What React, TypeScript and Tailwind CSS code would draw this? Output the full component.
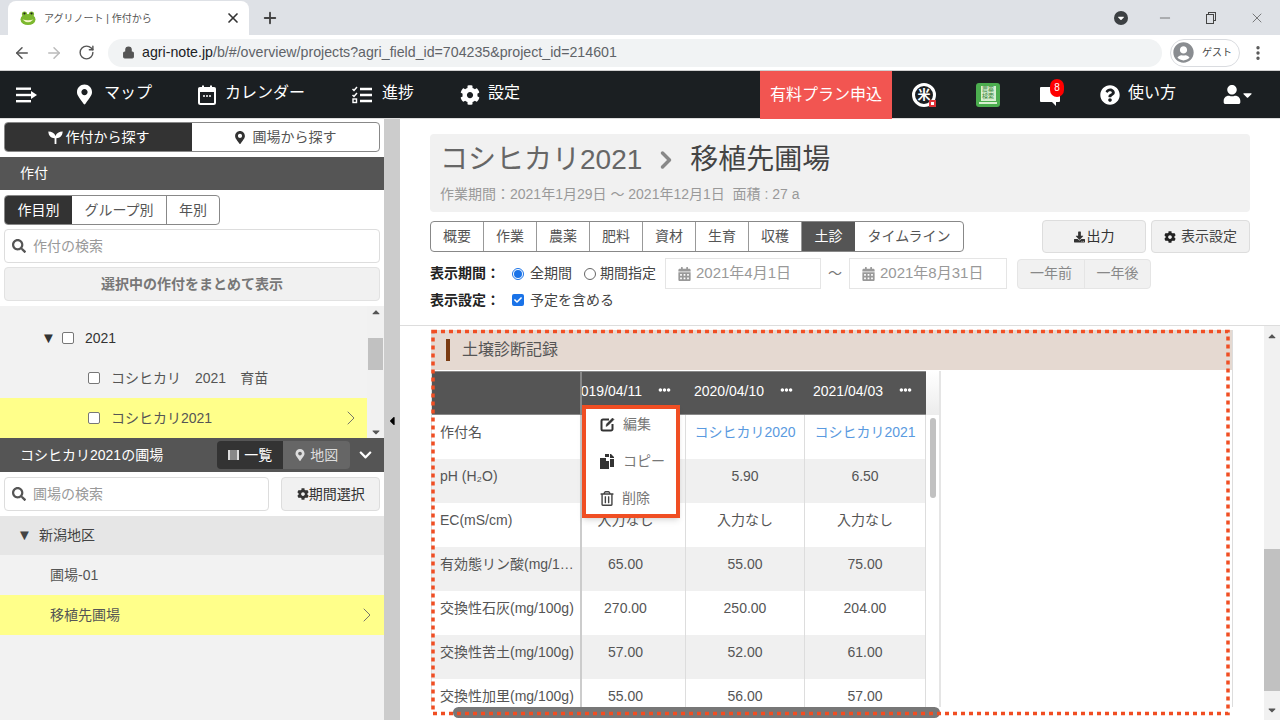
import { ReactNode } from "react"
import {
  FaMapMarkerAlt,
  FaCog,
  FaQuestionCircle,
  FaUser,
  FaUserCircle,
  FaCaretDown,
  FaCaretUp,
  FaCaretLeft,
  FaSearch,
  FaDownload,
  FaCalendarAlt,
  FaRegTrashAlt,
  FaEllipsisH,
  FaChevronDown,
  FaCheck,
} from "react-icons/fa"
import { ArrowLeft, ArrowRight, RotateCw, Lock, Plus, X, Minus, ChevronRight, EllipsisVertical } from "lucide-react"

const FONT = "[font-family:'Liberation_Sans','Noto_Sans_CJK_JP',sans-serif]"

function Frog() {
  return (
    <svg width="16" height="16" viewBox="0 0 16 16">
      <circle cx="4.5" cy="4" r="2.6" fill="#7cb82f" />
      <circle cx="11.5" cy="4" r="2.6" fill="#7cb82f" />
      <circle cx="4.5" cy="3.6" r="1.1" fill="#222" />
      <circle cx="11.5" cy="3.6" r="1.1" fill="#222" />
      <ellipse cx="8" cy="9.5" rx="7.5" ry="5.5" fill="#7cb82f" />
      <path d="M2.5 9.5 Q8 11 13.5 9.5 Q8 15 2.5 9.5Z" fill="#f4f7c8" />
    </svg>
  )
}

function Hamburger() {
  return (
    <svg width="21" height="16" viewBox="0 0 21 16" fill="#fff">
      <rect x="0" y="0.5" width="15" height="2.4" />
      <rect x="0" y="6.8" width="15" height="2.4" />
      <rect x="0" y="13" width="15" height="2.4" />
      <path d="M15 4 L21 8 L15 12Z" />
    </svg>
  )
}

function CalendarIcon() {
  return (
    <svg width="18" height="20" viewBox="0 0 18 20" fill="none" stroke="#fff">
      <rect x="1" y="3" width="16" height="16" rx="1.5" strokeWidth="2" />
      <rect x="1" y="3" width="16" height="3.5" fill="#fff" strokeWidth="1" />
      <path d="M5 0.5v3M13 0.5v3" strokeWidth="2" />
      <path d="M5 11h2M8 11h2M11 11h2" strokeWidth="1.6" />
    </svg>
  )
}

function TasksIcon() {
  return (
    <svg width="20" height="18" viewBox="0 0 20 18" fill="none" stroke="#fff">
      <path d="M0.5 3 L2 4.5 L5 1" strokeWidth="1.5" />
      <path d="M0.5 9 L2 10.5 L5 7" strokeWidth="1.5" />
      <rect x="1" y="13" width="3.5" height="3.5" strokeWidth="1.4" />
      <path d="M8 3h12M8 9h12M8 15h12" strokeWidth="2.4" />
    </svg>
  )
}

function Sprout() {
  return (
    <svg width="15" height="14" viewBox="0 0 15 14" fill="#fff">
      <path d="M6.6 14V8.2C3 8.2 0.6 6 0.3 1.5 4 1.6 6.5 3 7.5 6 8.5 3 11 1.6 14.7 1.5 14.4 6 12 8.2 8.4 8.2V14Z" />
    </svg>
  )
}

function KomeIcon() {
  return (
    <div className="relative flex h-6 w-6 items-center justify-center rounded-full border-[3px] border-white text-[13px] leading-none font-bold text-white">
      米
      <span className="absolute -right-[3px] -bottom-[3px] h-[7px] w-[7px] border-2 border-[#e0343a] bg-white" />
    </div>
  )
}

function BookIcon() {
  return (
    <div className="relative flex h-6 w-6 flex-col items-center rounded-[3px] bg-[#4cae4f] pt-[3px]">
      <div className="flex h-[15px] w-[15px] items-center justify-center bg-[#d8efd0] text-center text-[6px] leading-[7px] text-[#2f7d32]">
        農薬
        <br />
        検索
      </div>
      <span className="absolute bottom-[3px] h-[2px] w-[18px] bg-[#d8efd0]" />
    </div>
  )
}

function Bubble() {
  return (
    <div className="relative h-5 w-5">
      <svg width="20" height="22" viewBox="0 0 20 22" fill="#fff">
        <path d="M1 2h18a1 1 0 0 1 1 1v13a1 1 0 0 1-1 1h-3v4l-4-4H1a1 1 0 0 1-1-1V3a1 1 0 0 1 1-1Z" />
      </svg>
      <span className="absolute -top-[6px] left-[10px] flex h-[18px] w-[14px] items-center justify-center rounded-full bg-[#f00] text-[10px] text-white">8</span>
    </div>
  )
}

function NavItem({ icon, label, className }: { icon: ReactNode; label: string; className: string }) {
  return (
    <div className={`flex items-center text-[16px] text-white ${className}`}>
      {icon}
      <span className="pb-[3px]">{label}</span>
    </div>
  )
}

function Browser() {
  return (
    <>
      <div className="flex h-[35px] items-end bg-[#dee1e6]">
        <div className="ml-[8px] flex h-[34px] w-[241px] items-center rounded-t-lg bg-white pl-[12px] text-[10px] text-[#555]">
          <Frog />
          <span className="ml-[8px] whitespace-pre">アグリノート | 作付から</span>
          <X className="ml-auto mr-[8px] h-4 w-4 text-[#333]" strokeWidth={2.5} />
        </div>
        <Plus className="mb-[8px] ml-[12px] h-[18px] w-[18px] text-[#444]" strokeWidth={2.5} />
        <div className="ml-auto flex h-full items-center pr-[15px] text-[#444]">
          <div className="flex h-[14px] w-[14px] items-center justify-center rounded-full bg-[#3c4043]">
            <FaCaretDown className="h-[10px] w-[10px] text-white" />
          </div>
          <Minus className="ml-[29px] h-[16px] w-[16px]" strokeWidth={1} />
          <div className="relative ml-[30px] h-[16px] w-[16px]">
            <div className="absolute top-[2px] left-[5px] h-[9px] w-[8px] border border-[#444]" />
            <div className="absolute top-[4px] left-[3px] h-[10px] w-[8px] border border-[#444] bg-[#dee1e6]" />
          </div>
          <X className="ml-[30px] h-[16px] w-[16px]" strokeWidth={1} />
        </div>
      </div>
      <div className="flex h-[36px] items-center border-b border-[#d0d0d0] bg-white">
        <ArrowLeft className="ml-[13px] h-[18px] w-[18px] text-[#555]" strokeWidth={2} />
        <ArrowRight className="ml-[14px] h-[18px] w-[18px] text-[#bbb]" strokeWidth={2} />
        <RotateCw className="ml-[15px] h-[17px] w-[17px] text-[#555]" strokeWidth={2} />
        <div className="ml-[13px] flex h-[28px] w-[1054px] items-center rounded-full bg-[#f1f3f4] pl-[14px] text-[14.2px] text-[#202124]">
          <Lock className="h-[13px] w-[13px] fill-[#555] text-[#555]" />
          <span className="ml-[7px]">
            agri-note.jp<span className="text-[#5f6368]">/b/#/overview/projects?agri_field_id=704235&amp;project_id=214601</span>
          </span>
        </div>
        <div className="ml-[8px] flex h-[28px] w-[70px] items-center rounded-full border border-[#dadce0] pl-[2px] text-[10px] whitespace-nowrap text-[#444]">
          <FaUserCircle className="h-[21px] w-[21px] text-[#8a8d91]" />
          <span className="ml-[8px]">ゲスト</span>
        </div>
        <EllipsisVertical className="ml-[9px] h-[18px] w-[18px] text-[#555]" strokeWidth={2.5} />
      </div>
    </>
  )
}

function TopNav() {
  return (
    <div className="flex h-[48px] items-center border-b border-[#ddd] bg-[#1b1f22]">
      <div className="ml-[16px] flex"><Hamburger /></div>
      <NavItem className="ml-[40px]" label="マップ" icon={<FaMapMarkerAlt className="mr-[12px] h-[21px] w-[15px]" />} />
      <NavItem className="ml-[46px]" label="カレンダー" icon={<span className="mr-[9px] flex"><CalendarIcon /></span>} />
      <NavItem className="ml-[47px]" label="進捗" icon={<span className="mr-[10px] flex"><TasksIcon /></span>} />
      <NavItem className="ml-[46px]" label="設定" icon={<FaCog className="mr-[8px] h-5 w-5" />} />
      <div className="ml-[240px] flex h-[48px] w-[132px] items-center justify-center bg-[#f25551] text-[16px] text-white">有料プラン申込</div>
      <div className="ml-[20px]"><KomeIcon /></div>
      <div className="ml-[40px]"><BookIcon /></div>
      <div className="ml-[40px]"><Bubble /></div>
      <NavItem className="ml-[40px]" label="使い方" icon={<FaQuestionCircle className="mr-[8px] h-5 w-5" />} />
      <FaUser className="ml-[47px] h-[19px] w-[18px] text-white" />
      <FaCaretDown className="ml-[1px] h-[14px] w-[11px] text-white" />
    </div>
  )
}

function SearchBox({ text, className }: { text: string; className: string }) {
  return (
    <div className={`flex h-[34px] items-center rounded-[4px] border border-[#ddd] bg-white pl-[7px] text-[14px] text-[#999] ${className}`}>
      <FaSearch className="mr-[7px] h-[14px] w-[14px] text-[#555]" />
      {text}
    </div>
  )
}

function Check() {
  return <span className="h-[12px] w-[12px] rounded-[2px] border border-[#777] bg-white" />
}

function RowChevron({ className }: { className: string }) {
  return <ChevronRight className={`ml-auto h-[24px] w-[24px] text-[#666] ${className}`} strokeWidth={0.9} />
}

function Sidebar() {
  return (
    <div className="flex h-full w-[384px] flex-col bg-white text-[14px]">
      <div className="mx-[4px] mt-[3px] flex h-[30px] overflow-hidden rounded-[4px] border border-[#888]">
        <div className="flex w-[187px] items-center justify-center bg-[#333] text-white">
          <span className="mr-[3px] flex"><Sprout /></span>作付から探す
        </div>
        <div className="flex flex-1 items-center justify-center text-[#555]">
          <FaMapMarkerAlt className="mr-[8px] h-[13px] w-[10px] text-[#333]" />圃場から探す
        </div>
      </div>
      <div className="mt-[5px] flex h-[33px] items-center bg-[#555] pl-[20px] text-white">作付</div>
      <div className="mx-[4px] mt-[5px] flex h-[30px] w-[216px] overflow-hidden rounded-[4px] border border-[#888] text-[#555]">
        <div className="flex w-[67px] items-center justify-center bg-[#333] text-white">作目別</div>
        <div className="flex w-[95px] items-center justify-center border-r border-[#888]">グループ別</div>
        <div className="flex flex-1 items-center justify-center">年別</div>
      </div>
      <SearchBox text="作付の検索" className="mx-[4px] mt-[4px]" />
      <div className="mx-[4px] mt-[4px] flex h-[34px] items-center justify-center rounded-[4px] border border-[#e2e2e2] bg-[#f1f1f1] font-bold text-[#777]">
        選択中の作付をまとめて表示
      </div>
      <div className="mt-[5px] flex h-[132px] bg-[#f2f2f2] text-[#555]">
        <div className="flex w-[367px] flex-col pt-[12px]">
          <div className="flex h-[40px] items-center pl-[41px] text-[#333]">
            <span className="w-[21px] text-[15px]">▼</span>
            <Check />
            <span className="ml-[11px]">2021</span>
          </div>
          <div className="flex h-[40px] items-center pl-[88px]">
            <Check />
            <span className="ml-[11px] whitespace-pre">コシヒカリ　2021　育苗</span>
          </div>
          <div className="flex h-[40px] items-center bg-[#ffff8a] pl-[88px]">
            <Check />
            <span className="ml-[11px]">コシヒカリ2021</span>
            <RowChevron className="mr-[4px]" />
          </div>
        </div>
        <div className="flex w-[17px] flex-col items-center justify-between bg-[#f1f1f1]">
          <FaCaretUp className="h-3 w-3 text-[#555]" />
          <div className="mb-[52px] mt-[16px] h-[32px] w-[15px] bg-[#c1c1c1]" />
          <FaCaretDown className="h-3 w-3 text-[#555]" />
        </div>
      </div>
      <div className="flex h-[34px] items-center bg-[#555] pl-[20px] text-white">
        コシヒカリ2021の圃場
        <div className="ml-[54px] flex h-[28px] w-[133px] overflow-hidden rounded-[4px]">
          <div className="flex w-[66px] items-center justify-center bg-[#333]">
            <span className="mr-[5px] h-[10px] w-[11px] border-x-2 border-[#ddd] bg-[#888]" />一覧
          </div>
          <div className="flex flex-1 items-center justify-center bg-[#666] text-[#ddd]">
            <FaMapMarkerAlt className="mr-[5px] h-[12px] w-[10px]" />地図
          </div>
        </div>
        <FaChevronDown className="ml-[8px] h-[14px] w-[15px] text-white" />
      </div>
      <div className="flex h-[44px] items-center px-[4px]">
        <SearchBox text="圃場の検索" className="w-[266px]" />
        <div className="ml-[12px] flex h-[34px] w-[99px] items-center justify-center rounded-[4px] border border-[#ddd] bg-[#f1f1f1] text-[#333]">
          <FaCog className="h-[12px] w-[12px]" />期間選択
        </div>
      </div>
      <div className="flex h-[39px] items-center bg-[#e6e6e6] pl-[17px] text-[#444]">
        <span className="w-[22px] text-[15px]">▼</span>新潟地区
      </div>
      <div className="flex h-[40px] items-center bg-[#f2f2f2] pl-[50px] text-[#555]">圃場-01</div>
      <div className="flex h-[40px] items-center bg-[#ffff8a] pl-[50px] text-[#555]">
        移植先圃場
        <RowChevron className="mr-[5px]" />
      </div>
      <div className="flex-1 bg-[#f2f2f2]" />
    </div>
  )
}

const tabs = ["概要", "作業", "農薬", "肥料", "資材", "生育", "収穫", "土診"]

function PageHead() {
  return (
    <div className="h-[207px] border-b border-[#ddd] pt-[15px] pl-[30px] text-[14px]">
      <div className="h-[78px] w-[820px] rounded-[4px] bg-[#f1f1f1] pl-[10px] pt-[6px]">
        <div className="flex h-[40px] items-center text-[28px] text-[#666]">
          コシヒカリ2021
          <ChevronRight className="mx-[10px] h-[28px] w-[28px] text-[#888]" strokeWidth={3} />
          <span className="text-[#444]">移植先圃場</span>
        </div>
        <div className="mt-[4px] text-[14px] text-[#999]">作業期間：2021年1月29日 ～ 2021年12月1日&nbsp;&nbsp;面積 : 27 a</div>
      </div>
      <div className="mt-[9px] flex w-[820px] items-start">
        <div className="flex h-[31px] overflow-hidden rounded-[4px] border border-[#888] text-[#555]">
          {tabs.map((t) => (
            <div
              key={t}
              className={
                t === "土診"
                  ? "flex w-[53px] items-center justify-center bg-[#555] text-white"
                  : "flex w-[53px] items-center justify-center border-r border-[#999]"
              }
            >
              {t}
            </div>
          ))}
          <div className="flex w-[108px] items-center justify-center">タイムライン</div>
        </div>
        <div className="-mt-[1px] ml-auto flex h-[33px] w-[104px] items-center justify-center rounded-[4px] border border-[#ddd] bg-[#f1f1f1] text-[#333]">
          <FaDownload className="mr-[2px] h-[12px] w-[11px]" />出力
        </div>
        <div className="-mt-[1px] ml-[5px] flex h-[33px] w-[99px] items-center justify-center rounded-[4px] border border-[#ddd] bg-[#f1f1f1] text-[#444]">
          <FaCog className="mr-[5px] h-[12px] w-[12px] text-[#222]" />表示設定
        </div>
      </div>
      <div className="mt-[5px] flex h-[31px] items-center text-[#444]">
        <span className="w-[82px] font-bold text-[#222]">表示期間：</span>
        <span className="flex h-[12px] w-[12px] items-center justify-center rounded-full border border-[#1a73e8] bg-white">
          <span className="h-[8px] w-[8px] rounded-full bg-[#1a73e8]" />
        </span>
        <span className="ml-[6px]">全期間</span>
        <span className="ml-[12px] h-[12px] w-[12px] rounded-full border border-[#666]" />
        <span className="ml-[4px]">期間指定</span>
        <div className="ml-[9px] flex h-[31px] w-[156px] items-center border border-[#e5e5e5] pl-[12px] text-[15px] text-[#999]">
          <FaCalendarAlt className="mr-[5px] h-[14px] w-[13px]" />2021年4月1日
        </div>
        <span className="w-[28px] text-center text-[#777]">～</span>
        <div className="flex h-[31px] w-[158px] items-center border border-[#e5e5e5] pl-[12px] text-[15px] text-[#999]">
          <FaCalendarAlt className="mr-[5px] h-[14px] w-[13px]" />2021年8月31日
        </div>
        <div className="ml-[10px] flex h-[30px] w-[134px] rounded-[4px] border border-[#e5e5e5] bg-[#f1f1f1] text-[#888]">
          <span className="flex w-[67px] items-center justify-center border-r border-[#e5e5e5]">一年前</span>
          <span className="flex flex-1 items-center justify-center">一年後</span>
        </div>
      </div>
      <div className="mt-[1px] flex h-[20px] items-center text-[#444]">
        <span className="w-[82px] font-bold text-[#222]">表示設定：</span>
        <span className="flex h-[12px] w-[12px] items-center justify-center rounded-[2px] bg-[#1a73e8]">
          <FaCheck className="h-[8px] w-[8px] text-white" />
        </span>
        <span className="ml-[6px]">予定を含める</span>
      </div>
    </div>
  )
}

type Row = { label: string; values: string[]; link?: boolean }

const rows: Row[] = [
  { label: "作付名", values: ["", "コシヒカリ2020", "コシヒカリ2021"], link: true },
  { label: "pH (H₂O)", values: ["", "5.90", "6.50"] },
  { label: "EC(mS/cm)", values: ["入力なし", "入力なし", "入力なし"] },
  { label: "有効態リン酸(mg/1…", values: ["65.00", "55.00", "75.00"] },
  { label: "交換性石灰(mg/100g)", values: ["270.00", "250.00", "204.00"] },
  { label: "交換性苦土(mg/100g)", values: ["57.00", "52.00", "61.00"] },
  { label: "交換性加里(mg/100g)", values: ["55.00", "56.00", "57.00"] },
]

const dates = ["2019/04/11", "2020/04/10", "2021/04/03"]

function SoilTable() {
  return (
    <div className="flex h-[336px] w-[509px]">
      <div className="flex w-[494px] flex-col overflow-hidden">
        <div className="flex h-[44px] shrink-0 border-y border-[#888] bg-[#555] text-[14px] text-white">
          <div className="w-[150px] border-r-2 border-[#888]" />
          {dates.map((d, i) => (
            <div key={d} className={i === 0 ? "w-[104px] overflow-hidden" : i === 1 ? "w-[119px]" : "w-[121px]"}>
              <div className={i === 0 ? "-ml-[17px] flex h-full w-[121px] items-center pb-[3px] pl-[8px]" : "flex h-full items-center pb-[3px] pl-[8px]"}>
                {d}
                <FaEllipsisH className="ml-[16px] mb-[4px] h-[12px] w-[13px]" />
              </div>
            </div>
          ))}
        </div>
        {rows.map((r, i) => (
          <div key={r.label} className={`flex h-[44px] shrink-0 text-[14px] text-[#555] ${i % 2 === 1 ? "bg-[#f0f0f0]" : "bg-white"}`}>
            <div className="w-[150px] shrink-0 truncate border-r-2 border-[#ccc] pt-[7px] pl-[8px]">{r.label}</div>
            {r.values.map((v, j) => (
              <div
                key={j}
                className={`shrink-0 overflow-hidden border-r border-[#ddd] pt-[7px] ${j === 0 ? "w-[104px]" : j === 1 ? "w-[119px]" : "w-[121px]"}`}
              >
                <div className={`text-center ${j === 0 ? "-ml-[17px] w-[121px]" : ""} ${r.link ? "text-[#5a9ae0]" : ""}`}>{v}</div>
              </div>
            ))}
          </div>
        ))}
      </div>
      <div className="flex w-[15px] flex-col border-r-2 border-[#e5e5e5]">
        <div className="h-[44px] bg-gradient-to-b from-white to-[#ececec]" />
        <div className="mt-[3px] ml-[4px] h-[80px] w-[6px] rounded-full bg-[#c1c1c1]" />
      </div>
    </div>
  )
}

function RowMenu() {
  return (
    <div className="absolute top-[79px] left-[182px] z-20 flex h-[113px] w-[98px] flex-col justify-center border-[4px] border-[#f04e23] bg-white text-[14px] text-[#777] shadow-md">
      <div className="flex h-[37px] shrink-0 items-center pl-[14px]">
        <svg width="15" height="15" viewBox="0 0 15 15" fill="none" stroke="#333" strokeWidth="2" className="mr-[8px]">
          <path d="M9 2.5H3a1.5 1.5 0 0 0-1.5 1.500V12A1.500 1.500 0 0 0 3 13.500h8a1.500 1.500 0 0 0 1.500-1.500V7" />
          <path d="M6 9.500 L6.500 7 L12.500 1 L14 2.500 L8 8.500Z" fill="#333" strokeWidth="0.5" />
        </svg>
        編集
      </div>
      <div className="flex h-[37px] shrink-0 items-center pl-[14px]">
        <svg width="15" height="15" viewBox="0 0 15 15" fill="#333" className="mr-[8px]">
          <path d="M0 4h6v3h3v8H0Z" />
          <path d="M5 0h4v3H5ZM10 0l1 0 3 3v1h-4Z" />
          <path d="M10 5h4v8h-4Z" />
        </svg>
        コピー
      </div>
      <div className="flex h-[37px] shrink-0 items-center pl-[14px]">
        <FaRegTrashAlt className="mr-[8px] h-[15px] w-[14px] text-[#444]" />
        削除
      </div>
    </div>
  )
}

function Content() {
  return (
    <div className="relative flex flex-1 overflow-hidden">
      <div className="w-[864px] pl-[31px] pt-[4px]">
        <div className="w-[802px] border-l border-r border-[#ddd]">
          <div className="flex h-[40px] items-center bg-[#e5d9d1] pl-[14px] text-[16px] text-[#555]">
            <span className="mr-[12px] h-[22px] w-[4px] bg-[#7a3b12]" />
            土壌診断記録
          </div>
          <div className="pt-[1px]"><SoilTable /></div>
        </div>
        <div className="ml-[22px] h-[11px] w-[487px] rounded-full bg-[#777]" />
      </div>
      <div className="flex w-[16px] flex-col items-center justify-between bg-[#f1f1f1] py-[4px]">
        <FaCaretUp className="h-3 w-3 text-[#555]" />
        <div className="mt-[193px] h-[142px] w-full bg-[#c1c1c1]" />
        <FaCaretDown className="h-3 w-3 text-[#555]" />
      </div>
      <RowMenu />
      <svg className="pointer-events-none absolute top-[1px] left-[31px] z-30" width="802" height="392" fill="none">
        <rect x="2" y="4.500" width="795" height="382" stroke="#f04e23" strokeWidth="3.500" strokeDasharray="4 4" />
      </svg>
    </div>
  )
}

export default function App() {
  return (
    <div className={`relative flex h-[720px] w-[1280px] flex-col overflow-hidden bg-white ${FONT}`}>
      <Browser />
      <TopNav />
      <div className="flex min-h-0 flex-1">
        <Sidebar />
        <div className="flex w-[16px] items-center justify-center bg-[#ccc]">
          <FaCaretLeft className="mt-[3px] h-[14px] w-[10px] text-black" />
        </div>
        <div className="flex w-[880px] flex-col">
          <PageHead />
          <Content />
        </div>
      </div>
    </div>
  )
}
